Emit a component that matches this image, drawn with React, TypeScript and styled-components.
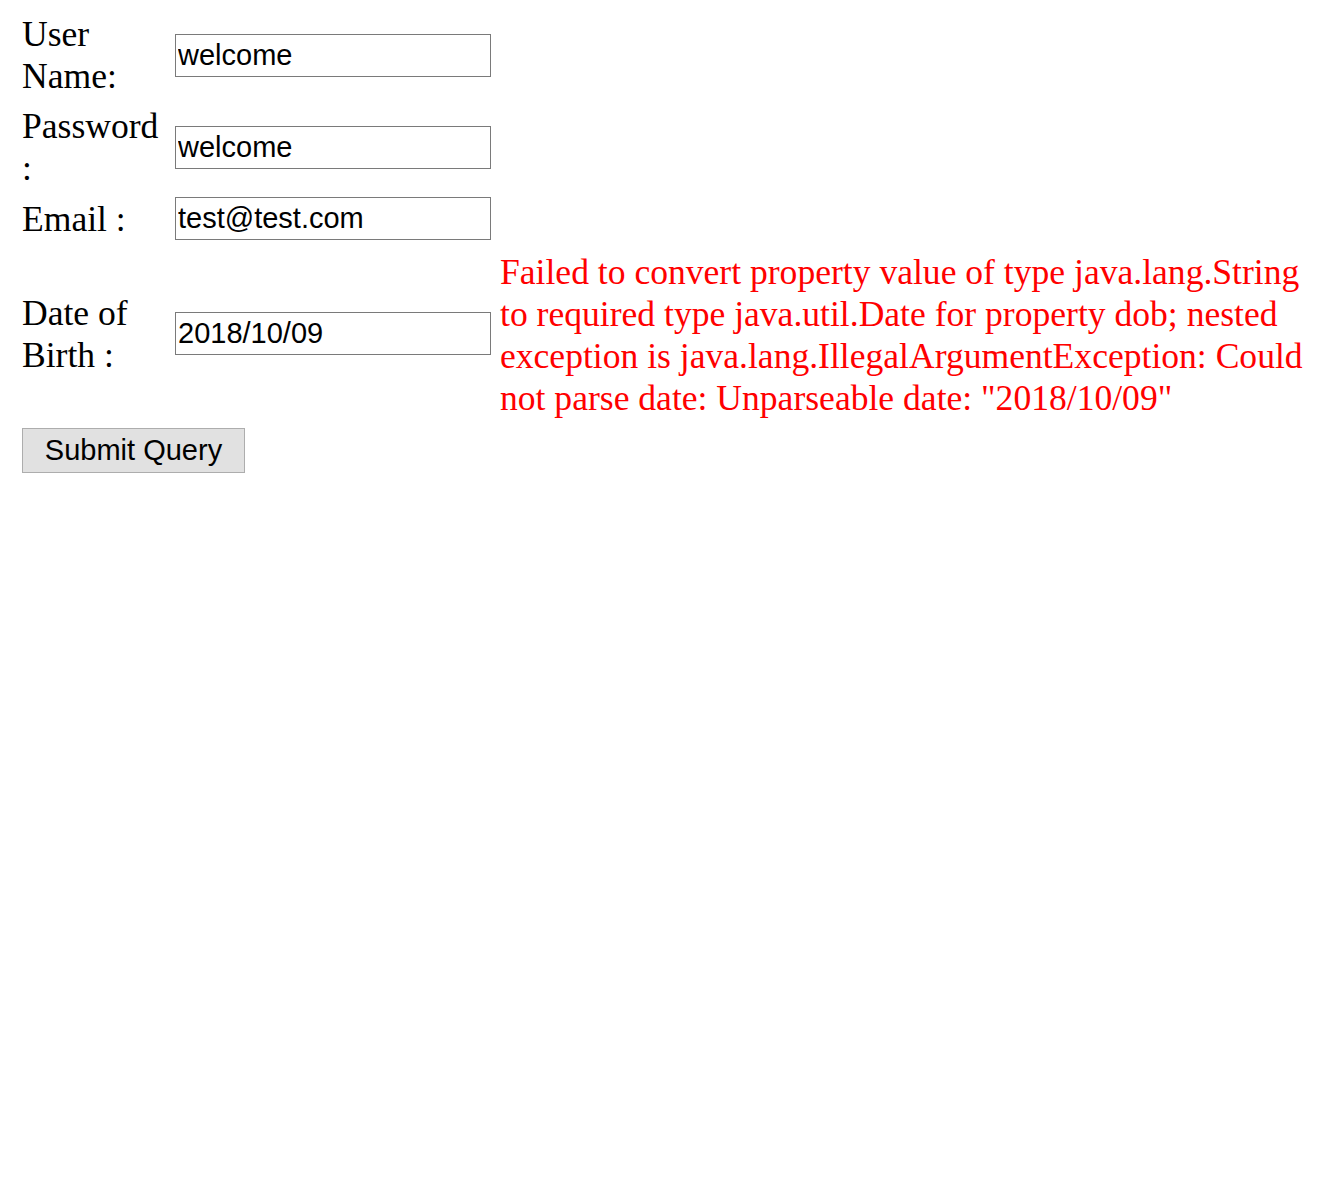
import React from 'react'
import styled, { createGlobalStyle } from 'styled-components'

const GlobalStyle = createGlobalStyle`
    body {
        margin: 0;
        background: #ffffff;
        font-family: 'Liberation Serif', 'Times New Roman', serif;
    }
`

interface Field {
    label: string
    value: string
    error?: string
}

const fields: Field[] = [
    { label: 'User Name:', value: 'welcome' },
    { label: 'Password :', value: 'welcome' },
    { label: 'Email :', value: 'test@test.com' },
    {
        label: 'Date of Birth :',
        value: '2018/10/09',
        error:
            'Failed to convert property value of type java.lang.String to required type java.util.Date for property dob; nested exception is java.lang.IllegalArgumentException: Could not parse date: Unparseable date: "2018/10/09"',
    },
]

export default function App() {
    return (
        <>
            <GlobalStyle />
            <Form onSubmit={(e) => e.preventDefault()}>
                {fields.map((f) => (
                    <React.Fragment key={f.label}>
                        <Label>{f.label}</Label>
                        <Input type="text" defaultValue={f.value} />
                        <ErrorText $filled={!!f.error}>{f.error}</ErrorText>
                    </React.Fragment>
                ))}
                <ButtonCell>
                    <SubmitButton type="submit">Submit Query</SubmitButton>
                </ButtonCell>
            </Form>
        </>
    )
}

const Form = styled.form`
    display: grid;
    grid-template-columns: 138px 316px 1fr;
    column-gap: 15px;
    row-gap: 8px;
    align-items: center;
    padding: 13px 10px 0 22px;
    font-size: 35.6px;
    line-height: 42px;
`

const Label = styled.div`
    color: #000;
`

const Input = styled.input`
    box-sizing: border-box;
    width: 316px;
    height: 43px;
    margin: 0;
    padding: 0 2px;
    border: 1px solid #7a7a7a;
    border-radius: 0;
    font-family: 'Liberation Sans', Arial, sans-serif;
    font-size: 29px;
    color: #000;
    outline: none;
`

const ErrorText = styled.div<{ $filled: boolean }>`
    color: #ff0000;
    margin-left: -6px;
    padding-top: ${(p) => (p.$filled ? '3px' : '0')};
`

const ButtonCell = styled.div`
    grid-column: 1 / -1;
`

const SubmitButton = styled.button`
    box-sizing: border-box;
    width: 223px;
    height: 45px;
    margin: 0;
    padding: 0;
    background: #e1e1e1;
    border: 1px solid #adadad;
    border-radius: 0;
    font-family: 'Liberation Sans', Arial, sans-serif;
    font-size: 29px;
    color: #000;
`
